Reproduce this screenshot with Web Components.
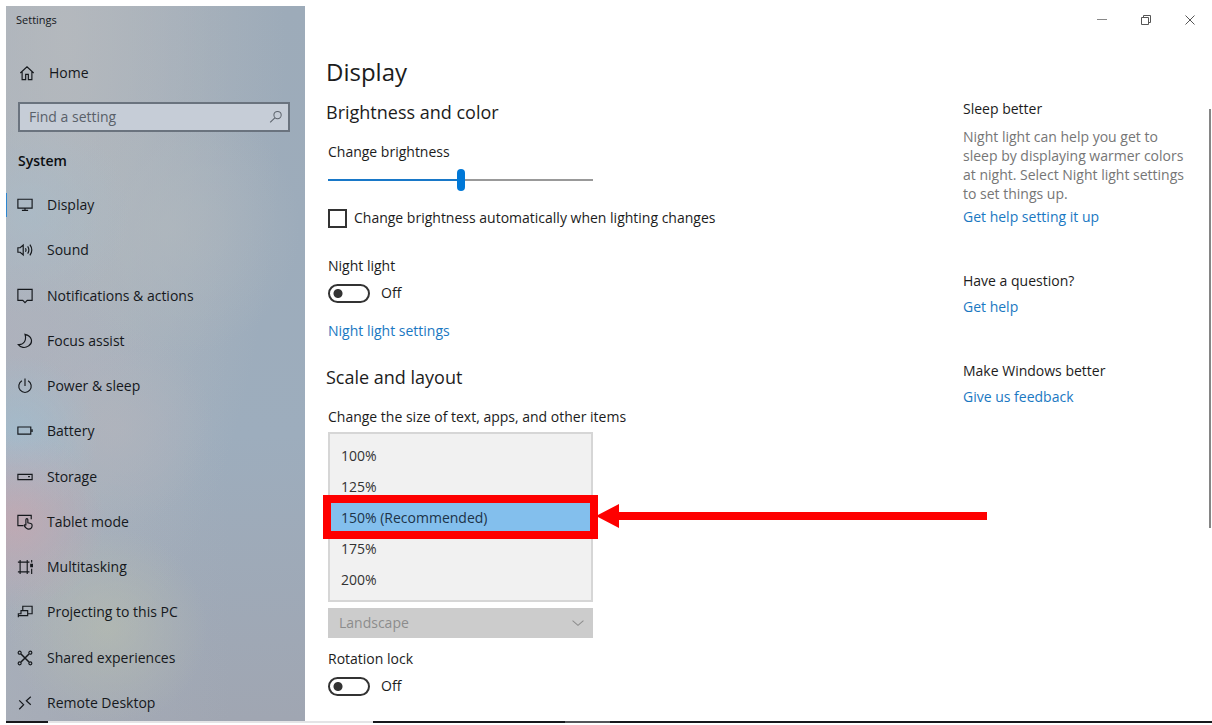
<!DOCTYPE html>
<html lang="en">
<head>
<meta charset="utf-8">
<title>Settings</title>
<style>
  body {
    margin: 0;
    background: #fff;
    color: #1c1c1c;
    font: 14px/20px "Open Sans", "Noto Sans", sans-serif;
  }
</style>
</head>
<body>
<settings-window>
  <side-nav slot="nav">
    <nav-item icon="display" active>Display</nav-item>
    <nav-item icon="sound">Sound</nav-item>
    <nav-item icon="notify">Notifications &amp; actions</nav-item>
    <nav-item icon="focus">Focus assist</nav-item>
    <nav-item icon="power">Power &amp; sleep</nav-item>
    <nav-item icon="battery">Battery</nav-item>
    <nav-item icon="storage">Storage</nav-item>
    <nav-item icon="tablet">Tablet mode</nav-item>
    <nav-item icon="multitask">Multitasking</nav-item>
    <nav-item icon="project">Projecting to this PC</nav-item>
    <nav-item icon="shared">Shared experiences</nav-item>
    <nav-item icon="remote">Remote Desktop</nav-item>
  </side-nav>
  <window-buttons slot="title"></window-buttons>
  <display-page></display-page>
  <help-pane slot="help">
    <help-topic heading="Sleep better" link="Get help setting it up">Night light can help you get to sleep by displaying warmer colors at night. Select Night light settings to set things up.</help-topic>
    <help-topic heading="Have a question?" link="Get help"></help-topic>
    <help-topic heading="Make Windows better" link="Give us feedback"></help-topic>
  </help-pane>
</settings-window>

<script>
const ICONS = {
  home: '<path d="M1.500 9 9 2l7.500 7M3.500 7.500v9h4v-6h3v6h4v-9"/>',
  display: '<path d="M1 2.500h16v10H1zM9 12.500V15M5.500 15h7"/>',
  sound: '<path d="M1 6.500h2.500L7 3.500v11l-3.500-3H1zM9.500 7q1.300 2 0 4M12 5q2.700 4 0 8M14.500 3q4.300 6 0 12"/>',
  notify: '<path d="M1 1.500h16v12.500h-5.500L9 16.500 6.500 14H1z"/>',
  focus: '<path d="M9 1.500c8 1.500 9.500 9.500 4 13-4 3-9 2-11.500-1.500C8 13.500 11 8 9 1.500z"/>',
  power: '<path d="M9 .5v8.500M5.500 3.200a7 7 0 1 0 7 0"/>',
  battery: '<path d="M1 4.500h14.500v8H1zM17 7v3"/>',
  storage: '<path d="M1 6h16v6H1zM12.500 8.500h2"/>',
  tablet: '<path d="M7 13H1V1.500h15V6M10 13V6.500c0-1.700 2.200-1.700 2.200 0v3.500l3.300.7q1.500.3 1.500 2c0 3-1.500 4.300-4 4.300-2.300 0-3-1-5-4 .2-1.200 1.200-1.300 2 0"/>',
  multitask: '<path d="M3.500 1v2.500M11.500 1v2.500M3.500 14.500V17M11.500 14.500V17M3.500 3.500v11h8v-11M1 3.500h13M1 14.500h13M16.500 1v3M16.500 11v6"/><path d="M15.500 6h2.300v2.500h-2.300z" fill="currentColor"/>',
  project: '<path d="M6.500 7V2.500h10.500v8.500h-5M4.500 7.500H12V13H1.500V11H4.500zM1.500 13v2"/>',
  shared: '<circle cx="3" cy="3" r="1.700"/><circle cx="15" cy="3" r="1.700"/><circle cx="3" cy="15" r="1.700"/><circle cx="15" cy="15" r="1.700"/><path d="m4.500 4.500 9 9M13.500 4.500l-9 9" stroke-width="1.700"/>',
  remote: '<path d="m2.500 6 5 5-5 5M15.500 2l-5 4.500 5 4.500"/>',
  search: '<circle cx="11" cy="6.500" r="4.700"/><path d="M7.500 10 1.500 16"/>',
  chevron: '<path d="m2 6 7 6 7-6"/>'
};

function icon(name) {
  return `<svg class="icon" viewBox="0 0 18 18" fill="none" stroke="currentColor" stroke-width="1.300" aria-hidden="true">${ICONS[name]}</svg>`;
}

class SettingsWindow extends HTMLElement {
  constructor() {
    super();
    this.attachShadow({ mode: 'open' });
    this.shadowRoot.innerHTML = `
      <style>
        :host {
          display: flex;
          flex-direction: column;
          box-sizing: border-box;
          height: 100vh;
          min-height: 720px;
          padding: 6px 0 2px 6px;
        }
        .window {
          flex: 1;
          min-height: 0;
          display: grid;
          grid-template-columns: 299px 1fr;
        }
        main {
          display: flex;
          flex-direction: column;
        }
        .columns {
          flex: 1;
          display: grid;
          grid-template-columns: 1fr 249px;
          padding-left: 21px;
        }
        .taskbar {
          display: grid;
          grid-template-columns: 42px 325px 192px 45px 1fr;
          height: 2px;
          background: #17181c;
        }
        .taskbar i:nth-child(2) { background: #e4e4e6; }
        .taskbar i:nth-child(4) { background: #55565a; }
      </style>
      <div class="window">
        <slot name="nav"></slot>
        <main>
          <slot name="title"></slot>
          <div class="columns">
            <slot></slot>
            <slot name="help"></slot>
          </div>
        </main>
      </div>
      <div class="taskbar"><i></i><i></i><i></i><i></i><i></i></div>
    `;
  }
}

class SideNav extends HTMLElement {
  constructor() {
    super();
    this.attachShadow({ mode: 'open' });
    this.shadowRoot.innerHTML = `
      <style>
        :host {
          display: flex;
          flex-direction: column;
          color: #15181c;
          background:
            radial-gradient(circle at 3% 72%, rgba(200, 166, 176, 0.7), transparent 90px),
            radial-gradient(circle at 4% 60%, rgba(160, 190, 208, 0.7), transparent 80px),
            radial-gradient(circle at 36% 59%, rgba(178, 180, 188, 0.7), transparent 100px),
            radial-gradient(circle at 34% 87%, rgba(182, 188, 176, 0.7), transparent 100px),
            radial-gradient(circle at 8% 29%, rgba(168, 188, 202, 0.6), transparent 100px),
            radial-gradient(circle at 55% 31%, rgba(176, 184, 190, 0.7), transparent 130px),
            radial-gradient(circle at 0% 47%, rgba(174, 176, 188, 0.6), transparent 140px),
            radial-gradient(ellipse at 20% 4%, rgba(184, 187, 190, 0.8), transparent 220px),
            linear-gradient(90deg, rgba(172, 178, 188, 0.6), transparent 75%),
            linear-gradient(#9dabb9, #9dadbd 60%, #a0a6b2);
        }
        .caption {
          padding: 4px 10px;
          font-size: 11px;
        }
        .home {
          display: flex;
          align-items: center;
          gap: 14px;
          margin-top: 28px;
          padding: 0 13px;
          height: 22px;
          color: inherit;
          text-decoration: none;
        }
        .icon { width: 16px; height: 16px; }
        .search {
          display: flex;
          align-items: center;
          box-sizing: border-box;
          height: 30px;
          margin: 18px 15px 0 12px;
          padding: 0 5px 0 9px;
          border: 2px solid #6a737e;
          background: #c6cdd7;
          color: #5c636c;
        }
        input {
          flex: 1;
          min-width: 0;
          padding: 0;
          border: 0;
          outline: 0;
          background: none;
          color: inherit;
          font: inherit;
        }
        input::placeholder { color: #596069; opacity: 1; }
        .search .icon { width: 14px; height: 14px; }
        h2 {
          margin: 18px 12px 0;
          font-size: 14px;
          line-height: 22px;
          font-weight: 600;
          color: #0c0f12;
        }
        nav {
          flex: 1;
          display: flex;
          flex-direction: column;
          justify-content: space-between;
          margin-top: 15px;
        }
      </style>
      <div class="caption">Settings</div>
      <a class="home" href="#home">${icon('home')}Home</a>
      <label class="search">
        <input type="text" placeholder="Find a setting" aria-label="Find a setting">
        ${icon('search')}
      </label>
      <h2>System</h2>
      <nav><slot></slot></nav>
    `;
  }
}

class NavItem extends HTMLElement {
  constructor() {
    super();
    this.attachShadow({ mode: 'open' });
    this.shadowRoot.innerHTML = `
      <style>
        :host { display: block; }
        a {
          display: flex;
          align-items: center;
          gap: 14px;
          height: 36px;
          padding-left: 11px;
          color: inherit;
          text-decoration: none;
        }
        .icon { width: 16px; height: 16px; }
        :host([active]) a {
          background: linear-gradient(#2d86d0, #2d86d0) left center / 1px 24px no-repeat;
        }
      </style>
      <a href="#${this.getAttribute('icon')}">${icon(this.getAttribute('icon'))}<slot></slot></a>
    `;
  }
}

class WindowButtons extends HTMLElement {
  constructor() {
    super();
    this.attachShadow({ mode: 'open' });
    this.shadowRoot.innerHTML = `
      <style>
        :host {
          display: flex;
          justify-content: flex-end;
        }
        button {
          display: grid;
          place-items: center;
          width: 44px;
          height: 27px;
          padding: 0;
          border: 0;
          background: none;
          color: #555;
        }
        svg { width: 12px; height: 12px; }
      </style>
      <button aria-label="Minimize"><svg viewBox="0 0 12 12" fill="none" stroke="#888"><path d="M1 5.500h10"/></svg></button>
      <button aria-label="Restore"><svg viewBox="0 0 12 12" fill="none" stroke="currentColor"><path d="M1.500 3.500h7v7h-7zM3.500 3V1.500h7v7H9"/></svg></button>
      <button aria-label="Close"><svg viewBox="0 0 12 12" fill="none" stroke="currentColor"><path d="m1.500 1.500 9 9M10.500 1.500l-9 9"/></svg></button>
    `;
  }
}

class ToggleSwitch extends HTMLElement {
  constructor() {
    super();
    this.attachShadow({ mode: 'open' });
    this.shadowRoot.innerHTML = `
      <style>
        :host { display: block; }
        label { display: block; }
        .row {
          display: flex;
          align-items: center;
          gap: 11px;
          height: 20px;
          margin-top: 7px;
        }
        input {
          appearance: none;
          box-sizing: border-box;
          width: 42px;
          height: 19px;
          margin: 0;
          border: 2px solid #333;
          border-radius: 10px;
          background: radial-gradient(circle at 8px 50%, #333 4px, transparent 5px);
        }
      </style>
      <label for="toggle">${this.getAttribute('label')}</label>
      <div class="row"><input type="checkbox" role="switch" id="toggle"><span>Off</span></div>
    `;
  }
}

class ScalePicker extends HTMLElement {
  constructor() {
    super();
    this.attachShadow({ mode: 'open' });
    this.shadowRoot.innerHTML = `
      <style>
        :host { display: block; }
        label { display: block; white-space: nowrap; }
        .list {
          position: relative;
          width: 265px;
          margin-top: 5px;
        }
        select {
          display: block;
          box-sizing: border-box;
          width: 100%;
          height: 170px;
          padding: 6px 0;
          border: 2px solid #d6d6d6;
          border-radius: 0;
          outline: 0;
          background: #f1f1f1;
          color: #333;
          font: inherit;
          overflow: hidden;
        }
        option {
          box-sizing: border-box;
          height: 31px;
          padding: 6px 11px 0;
          color: #333;
        }
        option:checked {
          background: #83bfed linear-gradient(#83bfed, #83bfed);
          color: #1d3348;
        }
        /* callout drawn over the recommended value */
        .frame {
          position: absolute;
          top: 63px;
          left: -5px;
          right: -5px;
          height: 44px;
          box-sizing: border-box;
          border: 8px solid #fe0000;
          pointer-events: none;
        }
        .arrow {
          position: absolute;
          top: 71px;
          left: 268px;
          width: 391px;
          height: 26px;
          fill: #fe0000;
        }
      </style>
      <label for="scale">Change the size of text, apps, and other items</label>
      <div class="list">
        <select id="scale" size="5">
          <option>100%</option>
          <option>125%</option>
          <option selected>150% (Recommended)</option>
          <option>175%</option>
          <option>200%</option>
        </select>
        <div class="frame"></div>
        <svg class="arrow" viewBox="0 0 391 26" aria-hidden="true"><path d="M0 13 23 1v8h368v8H23v8z"/></svg>
      </div>
    `;
  }
}

class DisplayPage extends HTMLElement {
  constructor() {
    super();
    this.attachShadow({ mode: 'open' });
    this.shadowRoot.innerHTML = `
      <style>
        :host {
          display: block;
          padding-top: 21px;
        }
        h1, h2 { margin: 0; font-weight: 400; }
        h1 { font-size: 24px; line-height: 36px; }
        h2 { font-size: 18px; line-height: 24px; }
        .group { padding-left: 2px; }
        .title { display: block; }
        h1 + h2 { margin-top: 10px; }
        h2 + .group { margin-top: 18px; }
        input[type=range] {
          appearance: none;
          display: block;
          width: 265px;
          height: 22px;
          margin: 7px 0 0;
          background: linear-gradient(90deg, #1878c8 50%, #999 50%) center / 100% 2px no-repeat;
        }
        input[type=range]::-webkit-slider-thumb {
          appearance: none;
          width: 8px;
          height: 22px;
          border-radius: 4px;
          background: #0078d7;
        }
        .check {
          display: flex;
          align-items: center;
          gap: 7px;
          margin-top: 17px;
          white-space: nowrap;
        }
        .check input {
          appearance: none;
          box-sizing: border-box;
          width: 19px;
          height: 19px;
          margin: 0;
          border: 2px solid #333;
        }
        toggle-switch { margin-top: 28px; }
        a {
          display: inline-block;
          margin: 18px 0 24px;
          color: #1a78c2;
          text-decoration: none;
        }
        .orientation {
          position: relative;
          width: 265px;
          margin-top: 6px;
          color: #8c8c8c;
        }
        .orientation select {
          appearance: none;
          display: block;
          width: 100%;
          height: 30px;
          padding: 0 11px;
          border: 0;
          border-radius: 0;
          background: #ccc;
          color: inherit;
          font: inherit;
          opacity: 1;
        }
        .orientation .icon {
          position: absolute;
          top: 8px;
          right: 8px;
          width: 14px;
          height: 14px;
        }
        .orientation + toggle-switch { margin-top: 11px; }
      </style>
      <h1>Display</h1>
      <h2>Brightness and color</h2>
      <div class="group">
        <label class="title" for="brightness">Change brightness</label>
        <input type="range" id="brightness" min="0" max="100" value="50">
        <label class="check"><input type="checkbox">Change brightness automatically when lighting changes</label>
        <toggle-switch label="Night light"></toggle-switch>
        <a href="#night-light">Night light settings</a>
      </div>
      <h2>Scale and layout</h2>
      <div class="group">
        <scale-picker></scale-picker>
        <div class="orientation">
          <select disabled aria-label="Orientation"><option>Landscape</option></select>
          ${icon('chevron')}
        </div>
        <toggle-switch label="Rotation lock"></toggle-switch>
      </div>
    `;
  }
}

class HelpPane extends HTMLElement {
  constructor() {
    super();
    this.attachShadow({ mode: 'open' });
    this.shadowRoot.innerHTML = `
      <style>
        :host {
          display: flex;
          justify-content: space-between;
          padding: 66px 1px 0 0;
        }
        .topics {
          display: flex;
          flex-direction: column;
          gap: 44px;
          width: 222px;
        }
        .scroll {
          width: 2px;
          height: 419px;
          margin-top: 10px;
          background: #858585;
        }
      </style>
      <div class="topics"><slot></slot></div>
      <div class="scroll"></div>
    `;
  }
}

class HelpTopic extends HTMLElement {
  constructor() {
    super();
    this.attachShadow({ mode: 'open' });
    this.shadowRoot.innerHTML = `
      <style>
        :host { display: block; }
        h3, p { margin: 0; font-size: 14px; font-weight: 400; }
        p {
          margin: 8px 0 -2px;
          line-height: 19px;
          color: #767676;
        }
        a {
          display: block;
          margin-top: 6px;
          color: #1a78c2;
          text-decoration: none;
        }
      </style>
      <h3>${this.getAttribute('heading')}</h3>
      ${this.textContent.trim() ? '<p><slot></slot></p>' : ''}
      <a href="#help">${this.getAttribute('link')}</a>
    `;
  }
}

customElements.define('settings-window', SettingsWindow);
customElements.define('side-nav', SideNav);
customElements.define('nav-item', NavItem);
customElements.define('window-buttons', WindowButtons);
customElements.define('toggle-switch', ToggleSwitch);
customElements.define('scale-picker', ScalePicker);
customElements.define('display-page', DisplayPage);
customElements.define('help-pane', HelpPane);
customElements.define('help-topic', HelpTopic);
</script>
</body>
</html>
